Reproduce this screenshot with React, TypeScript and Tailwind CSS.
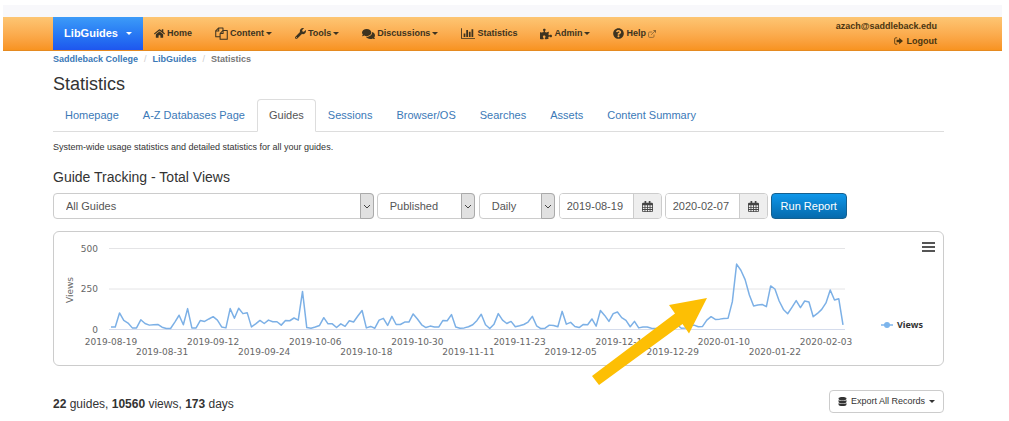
import type { ReactNode } from 'react';
import {
  FaComments,
  FaDatabase,
  FaHome,
  FaPuzzlePiece,
  FaQuestionCircle,
  FaWrench,
} from 'react-icons/fa';
import { clsx } from 'clsx';

// Daily views, one entry per day starting on 2019-08-19
const DAILY_VIEWS = [
  16, 16, 102, 56, 40, 10, 10, 60, 37, 27, 29, 31, 14, 6, 6, 46, 88, 29, 129, 10,
  10, 56, 50, 65, 79, 58, 16, 10, 129, 69, 131, 98, 104, 16, 35, 56, 37, 58, 48, 48,
  27, 56, 54, 71, 58, 235, 12, 8, 15, 25, 73, 35, 35, 12, 35, 19, 54, 46, 83, 117,
  10, 19, 8, 58, 69, 25, 81, 31, 31, 46, 46, 96, 65, 29, 12, 21, 15, 15, 56, 54,
  92, 15, 8, 10, 17, 29, 56, 94, 29, 6, 33, 98, 58, 37, 50, 17, 23, 31, 46, 81,
  23, 6, 8, 27, 25, 17, 112, 33, 44, 19, 12, 31, 29, 65, 21, 117, 87, 50, 98, 108,
  73, 56, 17, 50, 10, 15, 15, 8, 6, 8, 10, 15, 10, 31, 8, 10, 23, 27, 17, 19,
  58, 79, 62, 64, 68, 70, 172, 404, 366, 308, 213, 145, 151, 155, 141, 269, 250, 176, 124, 97,
  137, 178, 135, 176, 170, 79, 99, 124, 164, 244, 182, 190, 29,
];

const AXIS_DATES = [
  '2019-08-19',
  '2019-08-31',
  '2019-09-12',
  '2019-09-24',
  '2019-10-06',
  '2019-10-18',
  '2019-10-30',
  '2019-11-11',
  '2019-11-23',
  '2019-12-05',
  '2019-12-17',
  '2019-12-29',
  '2020-01-10',
  '2020-01-22',
  '2020-02-03',
];

const PLOT = { left: 55, right: 791, firstX: 57, lastX: 789, zeroY: 97.5, pxPerView: 0.162 };

const dayX = (day: number) =>
  PLOT.firstX + (day * (PLOT.lastX - PLOT.firstX)) / (DAILY_VIEWS.length - 1);
const viewsY = (views: number) => PLOT.zeroY - views * PLOT.pxPerView;

function Caret() {
  return (
    <svg viewBox="0 0 6 3" className="h-[3px] w-[6px]" fill="currentColor" aria-hidden="true">
      <path d="M0 0h6L3 3z" />
    </svg>
  );
}

function CopyIcon() {
  return (
    <svg
      viewBox="0 0 14 14"
      className="h-[13px] w-[13px]"
      fill="none"
      stroke="currentColor"
      strokeWidth="1.1"
      strokeLinejoin="round"
      aria-hidden="true"
    >
      <path d="M5.5 10.5H.8V4.2L4 1h4.6v2.6" />
      <path d="M4 1v3.2H.8" />
      <path d="M5.5 13.2V7l3.2-3.3h4.5v9.5z" />
      <path d="M8.7 3.7V7H5.5" />
    </svg>
  );
}

function BarChartIcon() {
  return (
    <svg viewBox="0 0 16 12" className="h-[11px] w-[14px]" fill="currentColor" aria-hidden="true">
      <path d="M0 0h1v11h15v1H0z" />
      <path d="M3 6h2v4H3zM6 2h2v8H6zM9 4h2v6H9zM12 1h2v9h-2z" />
    </svg>
  );
}

function CalendarIcon() {
  return (
    <svg viewBox="0 0 13 13" className="h-[11px] w-[11px]" aria-hidden="true">
      <path
        fill="currentColor"
        fillRule="evenodd"
        d="M1 2h2V0h2v2h3V0h2v2h2l1 1v9l-1 1H1l-1-1V3zM1 5v2h2V5zM4 5v2h2V5zM7 5v2h2V5zM10 5v2h2V5zM1 8v1.500h2V8zM4 8v1.500h2V8zM7 8v1.500h2V8zM10 8v1.500h2V8zM1 10.500V12h2v-1.500zM4 10.500V12h2v-1.500zM7 10.500V12h2v-1.500zM10 10.500V12h2v-1.500z"
      />
    </svg>
  );
}

function ExternalLinkIcon() {
  return (
    <svg
      viewBox="0 0 14 14"
      className="h-[8px] w-[8px] opacity-60"
      fill="none"
      stroke="currentColor"
      strokeWidth="1.4"
      aria-hidden="true"
    >
      <path d="M7.5 3.5H3a2 2 0 0 0-2 2V11a2 2 0 0 0 2 2h5.5a2 2 0 0 0 2-2V8M5.5 8.5L12 2" />
      <path d="M8.5 0H14v5.5z" fill="currentColor" stroke="none" />
    </svg>
  );
}

function SignOutIcon() {
  return (
    <svg viewBox="0 0 14 12" className="h-[8px] w-[9px]" aria-hidden="true">
      <path
        d="M5 1H3a2 2 0 0 0-2 2v6a2 2 0 0 0 2 2h2"
        fill="none"
        stroke="currentColor"
        strokeWidth="1.3"
      />
      <path d="M4 4h4V1l6 5-6 5V8H4z" fill="currentColor" />
    </svg>
  );
}

interface NavItemProps {
  icon: ReactNode;
  label: string;
  after?: ReactNode;
}

function NavItem({ icon, label, after }: NavItemProps) {
  return (
    <a href="#" className="flex items-center gap-0.5 text-[9px] font-bold text-[#3d3320]">
      {icon}
      {label}
      {after}
    </a>
  );
}

function Navbar() {
  return (
    <nav className="flex h-[34px] border-b border-[#e58a20] bg-linear-to-b from-[#fdc673] to-[#f8931f] pr-[65px] pl-[50px]">
      <button
        type="button"
        className="flex w-[90px] items-center justify-center gap-2 bg-linear-to-b from-[#3d9bf8] to-[#1f56ee] text-[11px] font-bold text-white"
      >
        LibGuides
        <Caret />
      </button>
      <div className="ml-[11px] flex items-center gap-[23px]">
        <NavItem icon={<FaHome className="h-[11px] w-[11px]" />} label="Home" />
        <NavItem icon={<CopyIcon />} label="Content" after={<Caret />} />
        <NavItem icon={<FaWrench className="h-[11px] w-[11px]" />} label="Tools" after={<Caret />} />
        <NavItem
          icon={<FaComments className="h-[12px] w-[13px]" />}
          label="Discussions"
          after={<Caret />}
        />
        <NavItem icon={<BarChartIcon />} label="Statistics" />
        <NavItem
          icon={<FaPuzzlePiece className="h-[12px] w-[12px]" />}
          label="Admin"
          after={<Caret />}
        />
        <NavItem
          icon={<FaQuestionCircle className="h-[11px] w-[11px]" />}
          label="Help"
          after={<ExternalLinkIcon />}
        />
      </div>
      <div className="ml-auto flex flex-col items-end justify-center text-[9px] leading-[15px] font-bold text-[#4a3510]">
        <span>azach@saddleback.edu</span>
        <a href="#" className="flex items-center gap-1">
          <SignOutIcon />
          Logout
        </a>
      </div>
    </nav>
  );
}

function Breadcrumbs() {
  return (
    <ol className="flex gap-[6px] pt-[2px] text-[9px] leading-3 font-bold text-[#777]">
      <li>
        <a href="#" className="text-[#3b79b7]">
          Saddleback College
        </a>
      </li>
      <li className="font-normal text-[#ccc]">/</li>
      <li>
        <a href="#" className="text-[#3b79b7]">
          LibGuides
        </a>
      </li>
      <li className="font-normal text-[#ccc]">/</li>
      <li>Statistics</li>
    </ol>
  );
}

const TABS = [
  'Homepage',
  'A-Z Databases Page',
  'Guides',
  'Sessions',
  'Browser/OS',
  'Searches',
  'Assets',
  'Content Summary',
];

function Tabs() {
  return (
    <div className="mt-1 flex border-b border-[#ddd]">
      {TABS.map((tab) => (
        <a
          key={tab}
          href="#"
          className={clsx(
            '-mb-px rounded-t border px-[11px] pt-2 pb-2 text-[11px] leading-[15px]',
            tab === 'Guides'
              ? 'border-[#ddd] border-b-white bg-white text-[#555]'
              : 'border-transparent text-[#3b79b7]',
          )}
        >
          {tab}
        </a>
      ))}
    </div>
  );
}

interface SelectFieldProps {
  label: string;
  value: string;
  className: string;
}

function SelectField({ label, value, className }: SelectFieldProps) {
  return (
    <div className={clsx('relative', className)}>
      <select
        aria-label={label}
        className="h-[26px] w-full appearance-none rounded border border-[#ccc] bg-white pr-4 pl-3 text-[11px] text-[#555]"
      >
        <option>{value}</option>
      </select>
      <span className="pointer-events-none absolute inset-y-0 right-0 flex w-[14px] items-center justify-center rounded-r-sm border border-[#aaa] bg-[#e1e1e1]">
        <svg viewBox="0 0 8 5" className="h-[5px] w-[8px]" fill="none" stroke="#444" aria-hidden="true">
          <path d="M1 1l3 3 3-3" />
        </svg>
      </span>
    </div>
  );
}

function DateField({ label, value }: { label: string; value: string }) {
  return (
    <div className="flex h-[26px] w-[103px] overflow-hidden rounded border border-[#ccc]">
      <input
        type="text"
        aria-label={label}
        defaultValue={value}
        className="w-[73px] bg-white pl-[7px] text-[11px] text-[#555]"
      />
      <button
        type="button"
        aria-label={`Pick ${label.toLowerCase()}`}
        className="flex flex-1 items-center justify-center border-l border-[#ccc] bg-[#eee] text-[#444]"
      >
        <CalendarIcon />
      </button>
    </div>
  );
}

function Filters() {
  return (
    <form className="mt-2 flex" onSubmit={(e) => e.preventDefault()}>
      <SelectField label="Guide" value="All Guides" className="w-[36%]" />
      <SelectField label="Status" value="Published" className="ml-[3px] w-[98px]" />
      <SelectField label="Interval" value="Daily" className="ml-1 w-[76px]" />
      <div className="ml-1 flex gap-[3px]">
        <DateField label="Start date" value="2019-08-19" />
        <DateField label="End date" value="2020-02-07" />
        <button
          type="submit"
          className="w-[76px] rounded border border-[#15608f] bg-linear-to-b from-[#0f97ea] to-[#066aad] text-[11px] text-white"
        >
          Run Report
        </button>
      </div>
    </form>
  );
}

function ViewsChart() {
  const points = DAILY_VIEWS.map((views, day) => `${dayX(day)},${viewsY(views)}`).join(' ');

  return (
    <div className="relative mt-3 rounded-md border border-[#ccc]">
      <svg
        viewBox="0 0 889 133"
        className="block h-auto w-full overflow-visible font-['DejaVu_Sans',sans-serif] text-[9px]"
        role="img"
        aria-label="Total views per day"
      >
        {[0, 250, 500].map((tick) => (
          <g key={tick}>
            <path
              d={`M${PLOT.left} ${viewsY(tick)}H${PLOT.right}`}
              stroke={tick === 0 ? '#d5dcec' : '#e4e4e6'}
            />
            <text x="44" y={viewsY(tick) + 3} textAnchor="end" fill="#666">
              {tick}
            </text>
          </g>
        ))}
        <text transform="translate(19 58) rotate(-90)" textAnchor="middle" fill="#666">
          Views
        </text>
        {AXIS_DATES.map((date, i) => (
          <text
            key={date}
            x={dayX(i * 12)}
            y={i % 2 === 0 ? 113 : 123}
            textAnchor="middle"
            fill="#666"
          >
            {date}
          </text>
        ))}
        <polyline
          points={points}
          fill="none"
          stroke="#7cb0e6"
          strokeWidth="1.5"
          strokeLinejoin="round"
        />

        <path d="M827 93h12" stroke="#7cb5ec" strokeWidth="1.5" />
        <circle cx="833" cy="93" r="3" fill="#7cb5ec" />
        <text x="843" y="96" fill="#333" className="font-['Noto_Sans',sans-serif] font-bold">
          Views
        </text>

        {/* Callout arrow towards the January peak */}
        <path d="M538 144L621 81.5L615 73L653 66L635 101.5L628.5 92L545 153z" fill="#fdbf04" />
      </svg>
      <button
        type="button"
        aria-label="Chart menu"
        className="absolute top-[10px] right-[8px] flex w-[13px] flex-col gap-[2px]"
      >
        <span className="h-[2px] w-full bg-[#555]" />
        <span className="h-[2px] w-full bg-[#555]" />
        <span className="h-[2px] w-full bg-[#555]" />
      </button>
    </div>
  );
}

export default function App() {
  return (
    <div className="bg-white pt-[5px] pr-[7px] pl-[3px] font-['Liberation_Sans',Arial,sans-serif] text-[#333]">
      <div className="h-3 bg-[#f8f8fb]" />
      <Navbar />
      <main className="pr-[58px] pl-[50px]">
        <Breadcrumbs />
        <h1 className="mt-2 text-[18px] leading-[22px]">Statistics</h1>
        <Tabs />
        <p className="mt-[9px] text-[9px] leading-3">
          System-wide usage statistics and detailed statistics for all your guides.
        </p>
        <h2 className="mt-4 text-[14px] leading-4">Guide Tracking - Total Views</h2>
        <Filters />
        <ViewsChart />
        <div className="mt-6 flex items-center justify-between">
          <p className="pt-1 text-[12px] leading-4">
            <strong>22</strong> guides, <strong>10560</strong> views, <strong>173</strong> days
          </p>
          <button
            type="button"
            className="flex h-[23px] items-center gap-1 rounded-sm border border-[#ccc] px-2 text-[9px]"
          >
            <FaDatabase className="h-[9px] w-[9px]" />
            Export All Records
            <Caret />
          </button>
        </div>
      </main>
    </div>
  );
}
